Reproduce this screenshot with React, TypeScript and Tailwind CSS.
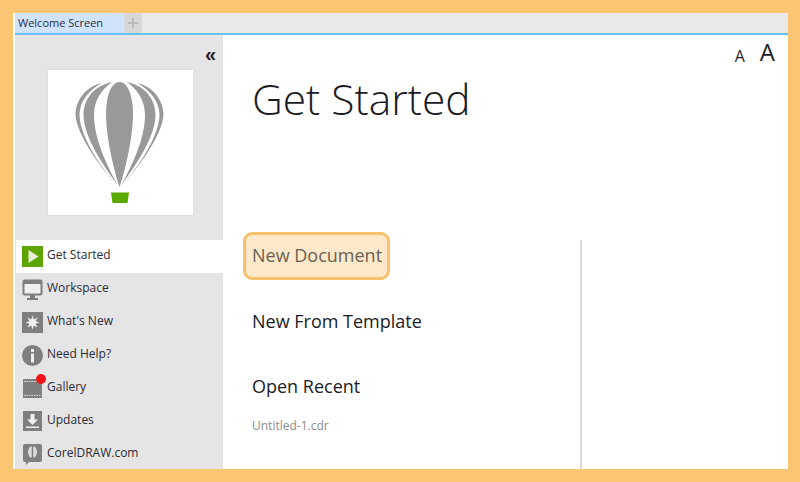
import React from "react";

const gray = "#7f7f7f";

function Balloon() {
  const left = (
    <>
      <path d="M55 14 C40 17 29 30 28.5 45 C29 66 55 100 70 117 C52 96 32.5 66 32.5 45 C33 32 42 21 55 14Z" />
      <path d="M65 13 C48 17 37 28 36.5 46 C37 70 58 98 71 117 C60 96 47 70 47 46 C47 32 54 21 65 13Z" />
    </>
  );
  return (
    <svg width="147" height="147" viewBox="0 0 147 147">
      <g fill="#999999">
        <path d="M72.5 13 C63 13 59 30 59 45 C59 70 68 105 72.5 118 C77 105 86 70 86 45 C86 30 82 13 72.5 13Z" />
        {left}
        <g transform="translate(145 0) scale(-1 1)">{left}</g>
      </g>
      <path d="M64 123.5 H82 L80.5 134 H65.5Z" fill="#5aa800" />
    </svg>
  );
}

const icons: Record<string, React.ReactNode> = {
  play: (
    <>
      <rect x="0" y="0" width="21" height="21" fill="#5ea500" />
      <path d="M6.5 4 L16.5 10.5 L6.5 17Z" fill="#e8f0dc" />
    </>
  ),
  monitor: (
    <>
      <rect x="1.5" y="1.5" width="18" height="14" rx="1" fill="#f0f0f0" stroke={gray} strokeWidth="2" />
      <rect x="1" y="1" width="19" height="4" fill={gray} />
      <rect x="8" y="16" width="5" height="3" fill={gray} />
      <rect x="5" y="19" width="11" height="2" fill={gray} />
    </>
  ),
  star: (
    <>
      <rect x="0" y="0" width="21" height="21" fill={gray} />
      <path
        d="M10.5 3.5 L11.8 7.4 L15.5 5.5 L13.6 9.2 L17.5 10.5 L13.6 11.8 L15.5 15.5 L11.8 13.6 L10.5 17.5 L9.2 13.6 L5.5 15.5 L7.4 11.8 L3.5 10.5 L7.4 9.2 L5.5 5.5 L9.2 7.4Z"
        fill="#f2f2f2"
      />
    </>
  ),
  info: (
    <>
      <circle cx="10.5" cy="10.5" r="10.5" fill={gray} />
      <rect x="9" y="4" width="3" height="3" fill="#f0f0f0" />
      <rect x="9" y="8.5" width="3" height="9" fill="#f0f0f0" />
    </>
  ),
  film: (
    <>
      <rect x="1" y="1" width="19" height="19" fill={gray} />
      <path d="M2 3.5 H19 M2 17.5 H19" stroke="#e0e0e0" strokeWidth="1" strokeDasharray="1.5 1" />
    </>
  ),
  download: (
    <>
      <rect x="1" y="0" width="19" height="20" fill={gray} />
      <path d="M8.5 3 H12.5 V8.5 H16 L10.5 14 L5 8.5 H8.5Z" fill="#f0f0f0" />
      <rect x="4" y="15.5" width="13" height="1.5" fill="#f0f0f0" />
    </>
  ),
  web: (
    <>
      <rect x="1" y="0" width="19" height="18" rx="2" fill={gray} />
      <path d="M4 18 L4 21 L7 18Z" fill={gray} />
      <ellipse cx="10.5" cy="8" rx="4.5" ry="6" fill="#dcdcdc" />
      <path d="M10.5 2 V14" stroke={gray} strokeWidth="1.5" />
    </>
  ),
};

const items = [
  { label: "Get Started", icon: "play", active: true },
  { label: "Workspace", icon: "monitor" },
  { label: "What's New", icon: "star" },
  { label: "Need Help?", icon: "info" },
  { label: "Gallery", icon: "film", dot: true },
  { label: "Updates", icon: "download" },
  { label: "CorelDRAW.com", icon: "web" },
];

export default function App() {
  return (
    <div className="w-[800px] h-[482px] bg-[#fac674] pl-[13px] pr-[12px] pt-[13px] pb-[13px] font-['Open_Sans',sans-serif] overflow-hidden">
      <div className="h-full flex flex-col bg-white pl-[2px]">
        <div className="h-[22px] shrink-0 flex bg-[#e9e9e9] border-b-2 border-[#66c2f5]">
          <div className="w-[108px] bg-[#cfe4fb] pl-[3px] text-[11px] leading-[20px] text-[#2b2b3a]">Welcome Screen</div>
          <div className="w-[18px] ml-[1px] bg-[#d8d8d8] flex items-center justify-center">
            <svg width="12" height="12" viewBox="0 0 12 12">
              <path d="M6 1 V11 M1 6 H11" stroke="#bbbbbb" strokeWidth="2" />
            </svg>
          </div>
        </div>
        <div className="flex-1 flex min-h-0">
          <aside className="w-[208px] shrink-0 bg-[#e5e5e5] flex flex-col overflow-hidden">
            <div className="h-[34px] shrink-0 flex justify-end items-center pr-[7px] pt-[4px]">
              <span className="text-[20px] leading-none font-bold text-[#20202c] font-['Liberation_Sans',sans-serif]">«</span>
            </div>
            <div className="ml-[32px] w-[147px] h-[147px] shrink-0 bg-white border border-[#e0e0e0] box-border overflow-hidden">
              <div className="-m-px">
                <Balloon />
              </div>
            </div>
            <nav className="mt-[24px] shrink-0 flex flex-col">
              {items.map((it) => (
                <div
                  key={it.label}
                  className={`relative h-[33px] shrink-0 flex items-center gap-[4px] text-[12px] text-[#2a2a35] ${
                    it.active ? "bg-white ml-[1px] pl-[6px]" : "pl-[7px]"
                  }`}
                >
                  <svg width="21" height="21" viewBox="0 0 21 21" className="shrink-0">
                    {icons[it.icon]}
                  </svg>
                  <span className="mb-[4px]">{it.label}</span>
                  {it.dot && <span className="absolute left-[21px] top-[2px] w-[10px] h-[10px] rounded-full bg-[#f5101a]" />}
                </div>
              ))}
            </nav>
          </aside>
          <main className="flex-1 flex flex-col min-w-0">
            <div className="h-[28px] shrink-0 flex justify-end items-start gap-[15px] pr-[13px] pt-[5px] text-[#1d1d28]">
              <span className="text-[16px] leading-[20px] mt-[6px]">A</span>
              <span className="text-[24px] leading-[24px]">A</span>
            </div>
            <h1 className="ml-[29px] mt-[5px] h-[61px] shrink-0 text-[42.5px] leading-[61px] font-light text-[#1c1c24]">Get Started</h1>
            <div className="flex-1 flex mt-[112px] min-h-0">
              <div className="w-[359px] shrink-0 border-r-2 border-[#dadada] -mt-[1px]">
                <div className="ml-[20px] -mt-[8px] w-[147px] h-[48px] rounded-[9px] border-[3px] border-[#f8c26c] bg-[#fde8c9] pl-[6px] pb-[2px] flex items-center text-[18px] text-[#6a6252]">
                  New Document
                </div>
                <div className="ml-[29px] mt-[29px] h-[25px] leading-[25px] text-[18px] text-[#1b1b25]">New From Template</div>
                <div className="ml-[29px] mt-[40px] h-[25px] leading-[25px] text-[18px] text-[#1b1b25]">Open Recent</div>
                <div className="ml-[29px] mt-[19px] text-[12px] leading-[16px] text-[#8d8d8d]">Untitled-1.cdr</div>
              </div>
            </div>
          </main>
        </div>
      </div>
    </div>
  );
}
